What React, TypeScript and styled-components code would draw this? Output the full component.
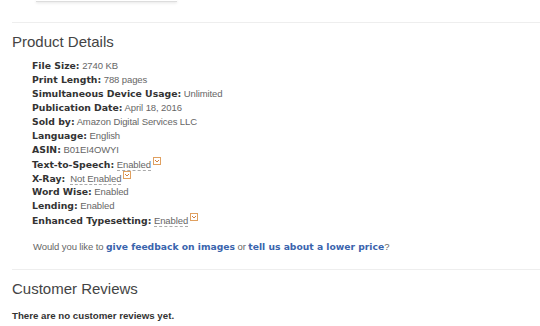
import React from "react";
import styled, { createGlobalStyle } from "styled-components";

const Global = createGlobalStyle`
  html, body { margin: 0; padding: 0; background: #fff; }
  body { width: 540px; height: 326px; overflow: hidden; font-family: "Liberation Sans", Arial, sans-serif; }
`;

const Page = styled.div`
  display: flex;
  flex-direction: column;
  padding-left: 12px;
`;

const TopBox = styled.div`
  margin-left: 24px;
  width: 141px;
  height: 1px;
  border-bottom: 1px solid #ddd;
  box-shadow: 0 1px 3px rgba(0, 0, 0, 0.12);
`;

const Divider = styled.hr<{ $top: number }>`
  margin: ${(p) => p.$top}px 0 0 0;
  border: none;
  border-top: 1px solid #eee;
  height: 0;
`;

const Heading = styled.h2<{ $top: number }>`
  margin: ${(p) => p.$top}px 0 0 0;
  font-family: "Liberation Sans", Arial, sans-serif;
  font-weight: normal;
  font-size: 15px;
  line-height: 18px;
  color: #444;
`;

const DetailList = styled.ul`
  list-style: none;
  margin: 8px 0 0 0;
  padding: 0 0 0 20px;
`;

const Row = styled.li`
  display: block;
  height: 14px;
  font-size: 9.5px;
  letter-spacing: -0.1px;
  line-height: 14px;
  color: #666;
  white-space: nowrap;
`;

const Label = styled.b`
  font-family: "DejaVu Sans", Verdana, sans-serif;
  font-weight: bold;
  font-size: 9.3px;
  letter-spacing: 0;
  line-height: 14px;
  color: #333;
`;

const Dashed = styled.span`
  border-bottom: 1px dashed #aaa;
`;

const PopIcon = styled.svg`
  display: inline-block;
  vertical-align: 3px;
  margin-left: 2px;
`;

const Feedback = styled.p`
  margin: 13px 0 0 21px;
  height: 14px;
  font-size: 9.5px;
  letter-spacing: -0.1px;
  line-height: 14px;
  color: #666;
`;

const Link = styled.a`
  font-family: "DejaVu Sans", Verdana, sans-serif;
  font-weight: bold;
  font-size: 9.2px;
  letter-spacing: 0;
  line-height: 14px;
  color: #3a64ad;
  text-decoration: none;
`;

const NoReviews = styled.p`
  margin: 11px 0 0 0;
  font-family: "Liberation Sans", Arial, sans-serif;
  font-weight: bold;
  font-size: 9.7px;
  line-height: 14px;
  color: #333;
`;

const Pop = () => (
  <PopIcon width="8" height="8" viewBox="0 0 8 8">
    <rect x="0.5" y="0.5" width="7" height="7" fill="#fff" stroke="#e0a060" />
    <path d="M2 3 L4 5 L6 3" fill="none" stroke="#d08040" strokeWidth="1" />
  </PopIcon>
);

type Item = { label: string; value: string; pop?: boolean; gap?: boolean };

const items: Item[] = [
  { label: "File Size:", value: "2740 KB" },
  { label: "Print Length:", value: "788 pages" },
  { label: "Simultaneous Device Usage:", value: "Unlimited" },
  { label: "Publication Date:", value: "April 18, 2016" },
  { label: "Sold by:", value: "Amazon Digital Services LLC" },
  { label: "Language:", value: "English" },
  { label: "ASIN:", value: "B01EI4OWYI" },
  { label: "Text-to-Speech:", value: "Enabled", pop: true },
  { label: "X-Ray:", value: "Not Enabled", pop: true, gap: true },
  { label: "Word Wise:", value: "Enabled" },
  { label: "Lending:", value: "Enabled" },
  { label: "Enhanced Typesetting:", value: "Enabled", pop: true },
];

export default function App() {
  return (
    <>
      <Global />
      <Page>
        <TopBox />
        <Divider $top={20} />
        <Heading $top={10}>Product Details</Heading>
        <DetailList>
          {items.map((it) => (
            <Row key={it.label}>
              <Label>{it.label}</Label>{" "}
              {it.gap ? "\u00a0" : null}
              {it.pop ? (
                <>
                  <Dashed>{it.value}</Dashed>
                  <Pop />
                </>
              ) : (
                it.value
              )}
            </Row>
          ))}
        </DetailList>
        <Feedback>
          Would you like to <Link href="#">give feedback on images</Link> or{" "}
          <Link href="#">tell us about a lower price</Link>?
        </Feedback>
        <Divider $top={15} />
        <Heading $top={10}>Customer Reviews</Heading>
        <NoReviews>There are no customer reviews yet.</NoReviews>
      </Page>
    </>
  );
}
